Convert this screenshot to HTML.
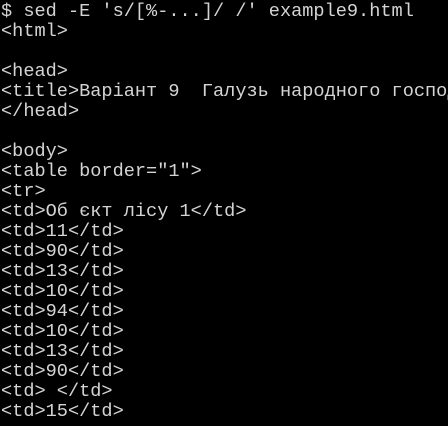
<!DOCTYPE html>
<html><head><meta charset="utf-8"><style>
html,body{margin:0;padding:0;background:#000;width:448px;height:426px;overflow:hidden}
pre{margin:0;padding:2px 0 0 1px;width:447px;overflow:hidden;font-family:"Liberation Mono","DejaVu Sans Mono",monospace;font-size:18.6px;letter-spacing:0;line-height:20px;color:#d4d4d4;white-space:pre}
</style></head><body>
<pre>$ sed -E 's/[%-...]/ /' example9.html
&lt;html&gt;

&lt;head&gt;
&lt;title&gt;Варіант 9  Галузь народного господ
&lt;/head&gt;

&lt;body&gt;
&lt;table border="1"&gt;
&lt;tr&gt;
&lt;td&gt;Об єкт лісу 1&lt;/td&gt;
&lt;td&gt;11&lt;/td&gt;
&lt;td&gt;90&lt;/td&gt;
&lt;td&gt;13&lt;/td&gt;
&lt;td&gt;10&lt;/td&gt;
&lt;td&gt;94&lt;/td&gt;
&lt;td&gt;10&lt;/td&gt;
&lt;td&gt;13&lt;/td&gt;
&lt;td&gt;90&lt;/td&gt;
&lt;td&gt; &lt;/td&gt;
&lt;td&gt;15&lt;/td&gt;
</pre>
</body></html>
